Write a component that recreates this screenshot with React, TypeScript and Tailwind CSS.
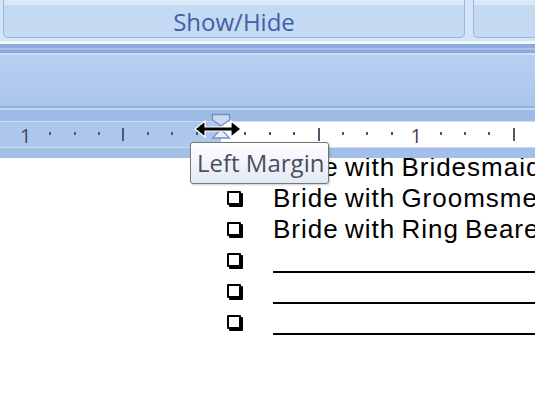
import React from "react";

const marks = Array.from({ length: 22 }, (_, i) => i - 8);

function Ruler() {
    return (
        <div className="relative h-[25px] flex">
            <div className="w-[221px] bg-[#adc7ec]" />
            <div className="flex-1 bg-white" />
            {marks.map((k) => {
                const x = 221 + k * 24.4;
                if (k === 0) return null;
                if (k % 8 === 0) {
                    return (
                        <span
                            key={k}
                            className="absolute top-[3px] -translate-x-1/2 text-[20px] leading-[22px] text-[#4b3f5c] font-['Open_Sans',sans-serif]"
                            style={{ left: x }}
                        >
                            1
                        </span>
                    );
                }
                if (k % 4 === 0) {
                    return <div key={k} className="absolute top-[6px] w-[2px] h-[13px] bg-[#55556a]" style={{ left: x - 1 }} />;
                }
                return <div key={k} className="absolute top-[10px] w-[2px] h-[3px] bg-[#55556a]" style={{ left: x - 1 }} />;
            })}
        </div>
    );
}

function Box() {
    return <div className="w-[14px] h-[14px] border-2 border-black bg-white rounded-[1px] shadow-[2px_2px_0_#000] shrink-0" />;
}

const rows = ["Bride with Bridesmaids", "Bride with Groomsmen", "Bride with Ring Bearer", "", "", ""];

export default function App() {
    return (
        <div className="relative w-[535px] h-[399px] overflow-hidden bg-white">
            {/* ribbon groups */}
            <div className="h-[41px] bg-[#d5e4f7] flex gap-[8px] pl-[3px]">
                <div className="w-[462px] h-[38px] rounded-b-[5px] border border-t-0 border-[#9db8de] bg-[#c4d9f2] flex flex-col">
                    <div className="h-[5px] bg-[#dbe8f8]" />
                    <div className="flex-1 flex items-center justify-center pt-[2px] text-[24px] leading-none text-[#3f5fa6] font-['Open_Sans',sans-serif]">
                        Show/Hide
                    </div>
                </div>
                <div className="flex-1 h-[38px] rounded-bl-[5px] border border-t-0 border-r-0 border-[#9db8de] bg-[#c4d9f2]">
                    <div className="h-[5px] bg-[#dbe8f8]" />
                </div>
            </div>
            <div className="h-[3px] bg-[#eef8fd]" />
            <div className="h-[4px] bg-[#8fabd9]" />
            <div className="h-[2px] bg-[#a9c3e8]" />
            <div className="h-[3px] bg-[#8aa8d8]" />
            <div className="h-[2px] bg-[#cfe0f5]" />
            <div className="h-[51px] bg-gradient-to-b from-[#b9cff0] to-[#aac5ec]" />
            <div className="h-[2px] bg-[#93b1de]" />
            <div className="h-[2px] bg-[#c3d7f2]" />
            <div className="h-[11px] bg-[#9dbbe5]" />
            <div className="h-[1px] bg-[#cadcf3]" />
            <Ruler />
            <div className="h-[1px] bg-[#cadcf3]" />
            <div className="h-[10px] bg-[#a3bfe7]" />

            {/* document */}
            <div className="h-[241px] overflow-hidden">
                <div className="-mt-[7px] pl-[227px] flex flex-col font-['Liberation_Sans',Arial,sans-serif] text-[26px] text-black tracking-[1px] [word-spacing:-2px]">
                    {rows.map((r, i) => (
                        <div key={i} className="h-[31px] flex items-center whitespace-nowrap">
                            <Box />
                            <div className="w-[32px] shrink-0" />
                            {r ? (
                                <span className="leading-none pt-[1px]">{r}</span>
                            ) : (
                                <div className="flex-1 h-[2px] bg-black mt-[25px]" />
                            )}
                        </div>
                    ))}
                </div>
            </div>

            {/* indent markers + resize cursor */}
            <svg className="absolute left-[210px] top-[112px]" width="22" height="30" viewBox="0 0 22 30">
                <path d="M2.5 2.5 H19.5 V8 L11 14 L2.5 8 Z" fill="#c9d9f0" stroke="#6f8ec2" strokeWidth="1.3" />
                <path d="M11 17 L19.5 26 H2.5 Z" fill="#e6eef9" stroke="#7a93bf" strokeWidth="1.3" />
            </svg>
            <svg className="absolute left-[193px] top-[118px]" width="50" height="22" viewBox="0 0 50 22">
                <polygon
                    points="2,11 12,3 12,9 38,9 38,3 48,11 38,19 38,13 12,13 12,19"
                    fill="#000"
                    stroke="#fff"
                    strokeWidth="1.2"
                />
            </svg>

            {/* tooltip */}
            <div className="absolute left-[190px] top-[142px] w-[139px] h-[42px] rounded-[3px] border border-[#767676] bg-gradient-to-b from-white to-[#e2e9f4] shadow-[1px_1px_2px_rgba(0,0,0,0.2)] flex items-center pl-[6px]">
                <span className="text-[24px] leading-none text-[#4f4b5e] font-['Open_Sans',sans-serif] pb-[1px]">Left Margin</span>
            </div>
        </div>
    );
}
